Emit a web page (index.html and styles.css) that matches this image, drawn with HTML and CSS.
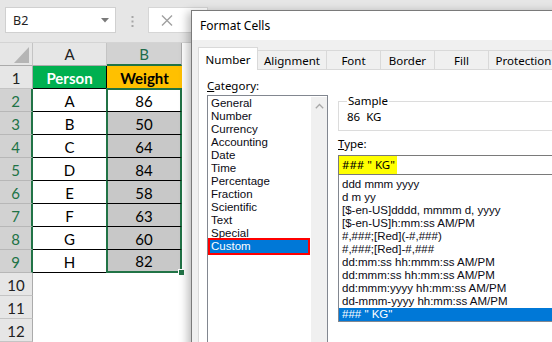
FILE: index.html
```html
<!DOCTYPE html>
<html>
<head>
<meta charset="utf-8">
<link rel="stylesheet" href="styles.css">
</head>
<body>
<div class="app">
  <div class="topbar">
    <div class="namebox">
      <span>B2</span>
      <svg class="nb-arrow" width="8" height="5" viewBox="0 0 8 5"><path d="M0 0H8L4 4.5Z" fill="#7a7a7a"/></svg>
    </div>
    <svg class="dots" width="3" height="11" viewBox="0 0 3 11"><rect x="0.5" y="0" width="2" height="2" fill="#a6a6a6"/><rect x="0.5" y="4.5" width="2" height="2" fill="#a6a6a6"/><rect x="0.5" y="9" width="2" height="2" fill="#a6a6a6"/></svg>
    <div class="fxbox">
      <svg width="12" height="11" viewBox="0 0 12 11"><path d="M1 0.5L11 10.5M11 0.5L1 10.5" stroke="#a0a0a0" stroke-width="1.4"/></svg>
    </div>
  </div>

  <div class="sheet">
    <div class="corner"><svg width="15" height="16" viewBox="0 0 15 16"><path d="M15 0V16H0Z" fill="#b5b5b5"/></svg></div>
    <div class="colhead">A</div>
    <div class="colhead sel">B</div>

    <div class="rowhead">1</div>
    <div class="cell c-a head-green">Person</div>
    <div class="cell c-b head-gold">Weight</div>

    <div class="rowhead sel">2</div>
    <div class="cell c-a">A</div>
    <div class="cell c-b first">86</div>

    <div class="rowhead sel">3</div>
    <div class="cell c-a">B</div>
    <div class="cell c-b shade">50</div>

    <div class="rowhead sel">4</div>
    <div class="cell c-a">C</div>
    <div class="cell c-b shade">64</div>

    <div class="rowhead sel">5</div>
    <div class="cell c-a">D</div>
    <div class="cell c-b shade">84</div>

    <div class="rowhead sel">6</div>
    <div class="cell c-a">E</div>
    <div class="cell c-b shade">58</div>

    <div class="rowhead sel">7</div>
    <div class="cell c-a">F</div>
    <div class="cell c-b shade">63</div>

    <div class="rowhead sel">8</div>
    <div class="cell c-a">G</div>
    <div class="cell c-b shade">60</div>

    <div class="rowhead sel">9</div>
    <div class="cell c-a">H</div>
    <div class="cell c-b shade last">82<span class="handle"></span></div>

    <div class="rowhead">10</div>
    <div class="cell empty"></div>
    <div class="cell empty"></div>

    <div class="rowhead">11</div>
    <div class="cell empty"></div>
    <div class="cell empty"></div>

    <div class="rowhead">12</div>
    <div class="cell empty"></div>
    <div class="cell empty"></div>
  </div>

  <div class="dialog">
    <div class="titlebar">Format Cells</div>
    <div class="tabs">
      <div class="tab active w-number">Number</div>
      <div class="tab w-align">Alignment</div>
      <div class="tab w-font">Font</div>
      <div class="tab w-border">Border</div>
      <div class="tab w-fill">Fill</div>
      <div class="tab w-prot">Protection</div>
    </div>
    <div class="panel">
      <div class="leftcol">
        <div class="label"><u>C</u>ategory:</div>
        <div class="catlist">
          <div class="items">
            <div class="item">General</div>
            <div class="item">Number</div>
            <div class="item">Currency</div>
            <div class="item">Accounting</div>
            <div class="item">Date</div>
            <div class="item">Time</div>
            <div class="item">Percentage</div>
            <div class="item">Fraction</div>
            <div class="item">Scientific</div>
            <div class="item">Text</div>
            <div class="item">Special</div>
            <div class="item selected boxed">Custom</div>
          </div>
          <div class="scrollbar">
            <svg width="9" height="6" viewBox="0 0 9 6"><path d="M0.8 5.2L4.5 1.5L8.2 5.2" fill="none" stroke="#a8a8a8" stroke-width="1.3"/></svg>
          </div>
        </div>
      </div>
      <div class="rightcol">
        <fieldset class="sample">
          <legend>Sample</legend>
          <div class="sample-val">86&nbsp; KG</div>
        </fieldset>
        <div class="label type-label"><u>T</u>ype:</div>
        <div class="typebox"><span class="hl">### " KG"</span></div>
        <div class="typelist">
          <div class="item">ddd mmm yyyy</div>
          <div class="item">d m yy</div>
          <div class="item">[$-en-US]dddd, mmmm d, yyyy</div>
          <div class="item">[$-en-US]h:mm:ss AM/PM</div>
          <div class="item">#,###;[Red](-#,###)</div>
          <div class="item">#,###;[Red]-#,###</div>
          <div class="item">dd:mm:ss hh:mmm:ss AM/PM</div>
          <div class="item">dd:mmm:ss hh:mm:ss AM/PM</div>
          <div class="item">dd:mmm:yyyy hh:mm:ss AM/PM</div>
          <div class="item">dd-mmm-yyyy hh:mm:ss AM/PM</div>
          <div class="item selected">### " KG"</div>
        </div>
      </div>
    </div>
  </div>
</div>
</body>
</html>
```

FILE: styles.css
```css
* { box-sizing: border-box; }
html, body { margin: 0; padding: 0; }
body {
  width: 552px;
  height: 342px;
  overflow: hidden;
  background: #fff;
}
.app {
  position: relative;
  width: 552px;
  height: 342px;
  overflow: hidden;
  font-family: "Lato", "Open Sans", sans-serif;
}

/* ---------- formula bar ---------- */
.topbar {
  height: 43px;
  background: #e6e6e6;
  display: flex;
  align-items: flex-start;
  padding: 7px 0 0 5px;
  border-bottom: 1px solid #d4d4d4;
}
.namebox {
  width: 111px;
  height: 26px;
  background: #fff;
  border: 1px solid #d0d0d0;
  display: flex;
  align-items: center;
  justify-content: space-between;
  padding: 0 6px 0 7px;
  font-family: "Noto Sans", "Open Sans", sans-serif;
  font-size: 12.5px;
  color: #222;
}
.nb-arrow { margin-top: 1px; }
.dots { margin: 9px 0 0 15px; }
.fxbox {
  margin-left: 14px;
  width: 60px;
  height: 26px;
  background: #fff;
  border: 1px solid #d6d6d6;
  display: flex;
  align-items: center;
  padding-left: 12px;
}

/* ---------- sheet grid ---------- */
.sheet {
  display: grid;
  grid-template-columns: 33px 74px 75px;
  grid-auto-rows: 23px;
  width: 182px;
  font-size: 15px;
  color: #000;
}
.corner {
  background: #e6e6e6;
  border-right: 1px solid #c4c4c4;
  border-bottom: 1px solid #ababab;
  display: flex;
  align-items: flex-end;
  justify-content: flex-end;
  padding: 0 3px 2px 0;
}
.colhead {
  background: #e6e6e6;
  border-right: 1px solid #c4c4c4;
  border-bottom: 1px solid #ababab;
  display: flex;
  align-items: center;
  justify-content: center;
  font-size: 15px;
  color: #222;
}
.colhead.sel {
  background: #d2d2d2;
  color: #1e6b4a;
  border-bottom: 2px solid #217346;
  border-right: 1px solid #ababab;
}
.rowhead {
  background: #e6e6e6;
  border-bottom: 1px solid #c4c4c4;
  border-right: 1px solid #ababab;
  display: flex;
  align-items: center;
  justify-content: center;
  color: #222;
  font-size: 15px;
  padding-top: 1px;
}
.rowhead.sel {
  background: #d2d2d2;
  color: #217346;
  border-right: 2px solid #217346;
  border-bottom-color: #b7b7b7;
}
.cell {
  display: flex;
  align-items: center;
  justify-content: center;
  padding-top: 1px;
  border-bottom: 1px solid #000;
  position: relative;
}
.cell.c-a { border-right: 1px solid #000; }
.head-green {
  background: #00b050;
  color: #fff;
  font-weight: 700;
}
.head-gold {
  background: #ffc000;
  font-weight: 700;
}
.cell.first, .cell.shade {
  border-left: 2px solid #217346;
  border-right: 2px solid #217346;
  margin-left: -1px;
}
.cell.first { border-top: 2px solid #217346; margin-top: -1px; }
.cell.shade { background: #c8c8c8; }
.cell.last { border-bottom: 2px solid #217346; }
.cell.empty { border: none; }
.handle {
  position: absolute;
  right: -5px;
  bottom: -5px;
  width: 7px;
  height: 7px;
  background: #217346;
  border: 1px solid #fff;
}

/* ---------- dialog ---------- */
.dialog {
  position: absolute;
  left: 191px;
  top: 10px;
  width: 420px;
  height: 400px;
  background: #f0f0f0;
  border: 1px solid #7a7a7a;
  box-shadow: -3px 2px 9px rgba(0, 0, 0, 0.28);
  font-family: "Noto Sans", "Open Sans", sans-serif;
  font-size: 11.5px;
  color: #000;
}
.titlebar {
  height: 29px;
  background: #fff;
  padding-left: 8px;
  line-height: 29px;
  font-size: 12px;
}
.tabs {
  display: flex;
  align-items: flex-end;
  height: 29px;
  padding: 7px 0 0 6px;
  position: relative;
  z-index: 1;
}
.tab {
  height: 19px;
  border: 1px solid #d9d9d9;
  border-left: none;
  border-bottom: none;
  background: #f0f0f0;
  display: flex;
  align-items: center;
  justify-content: center;
  padding-top: 1px;
}
.tab.active {
  height: 23px;
  background: #fff;
  border-left: 1px solid #d9d9d9;
  margin-bottom: -1px;
  padding-top: 0;
}
.w-number { width: 60px; }
.w-align { width: 69px; }
.w-font { width: 54px; }
.w-border { width: 54px; }
.w-fill { width: 54px; }
.w-prot { width: 70px; }

.panel {
  margin-left: 6px;
  background: #fff;
  border: 1px solid #d9d9d9;
  height: 330px;
  display: flex;
  gap: 10px;
  padding: 8px 0 0 8px;
}
.leftcol { width: 121px; }
.label { height: 17px; line-height: 15px; }
.catlist {
  height: 260px;
  border: 1px solid #828790;
  display: flex;
  padding-top: 1px;
}
.items { flex: 1; }
.item {
  height: 13px;
  line-height: 13px;
  padding-left: 3px;
  white-space: nowrap;
  font-family: "Liberation Sans", Arial, sans-serif;
  font-size: 11.5px;
  color: #0a0a14;
}
.catlist .item.selected {
  margin-left: 2px;
  padding-left: 1px;
  width: 98px;
}
.item.selected {
  background: #0078d7;
  color: #fff;
}
.item.boxed { outline: 2px solid #ff0000; }
.scrollbar {
  width: 16px;
  background: #f0f0f0;
  display: flex;
  justify-content: center;
  padding-top: 6px;
}

.rightcol { flex: 1; }
.sample {
  margin: 16px 0 0 0;
  padding: 2px 0 0 8px;
  height: 37px;
  border: 1px solid #dcdcdc;
  min-width: 0;
}
.sample legend {
  padding: 0 1px;
  margin-left: 0;
  line-height: 14px;
}
.sample-val { line-height: 14px; }
.type-label { margin-top: 5px; }
.typebox {
  margin-top: 2px;
  height: 20px;
  border: 1px solid #7a7a7a;
  padding: 0;
  display: flex;
  align-items: stretch;
}
.hl {
  background: #ffff00;
  width: 58px;
  padding-left: 3px;
  line-height: 18px;
  white-space: pre;
}
.typelist {
  height: 147px;
  border: 1px solid #828790;
  border-top: none;
  padding-top: 3px;
}
.typelist .item { padding-left: 3px; white-space: pre; }
```
